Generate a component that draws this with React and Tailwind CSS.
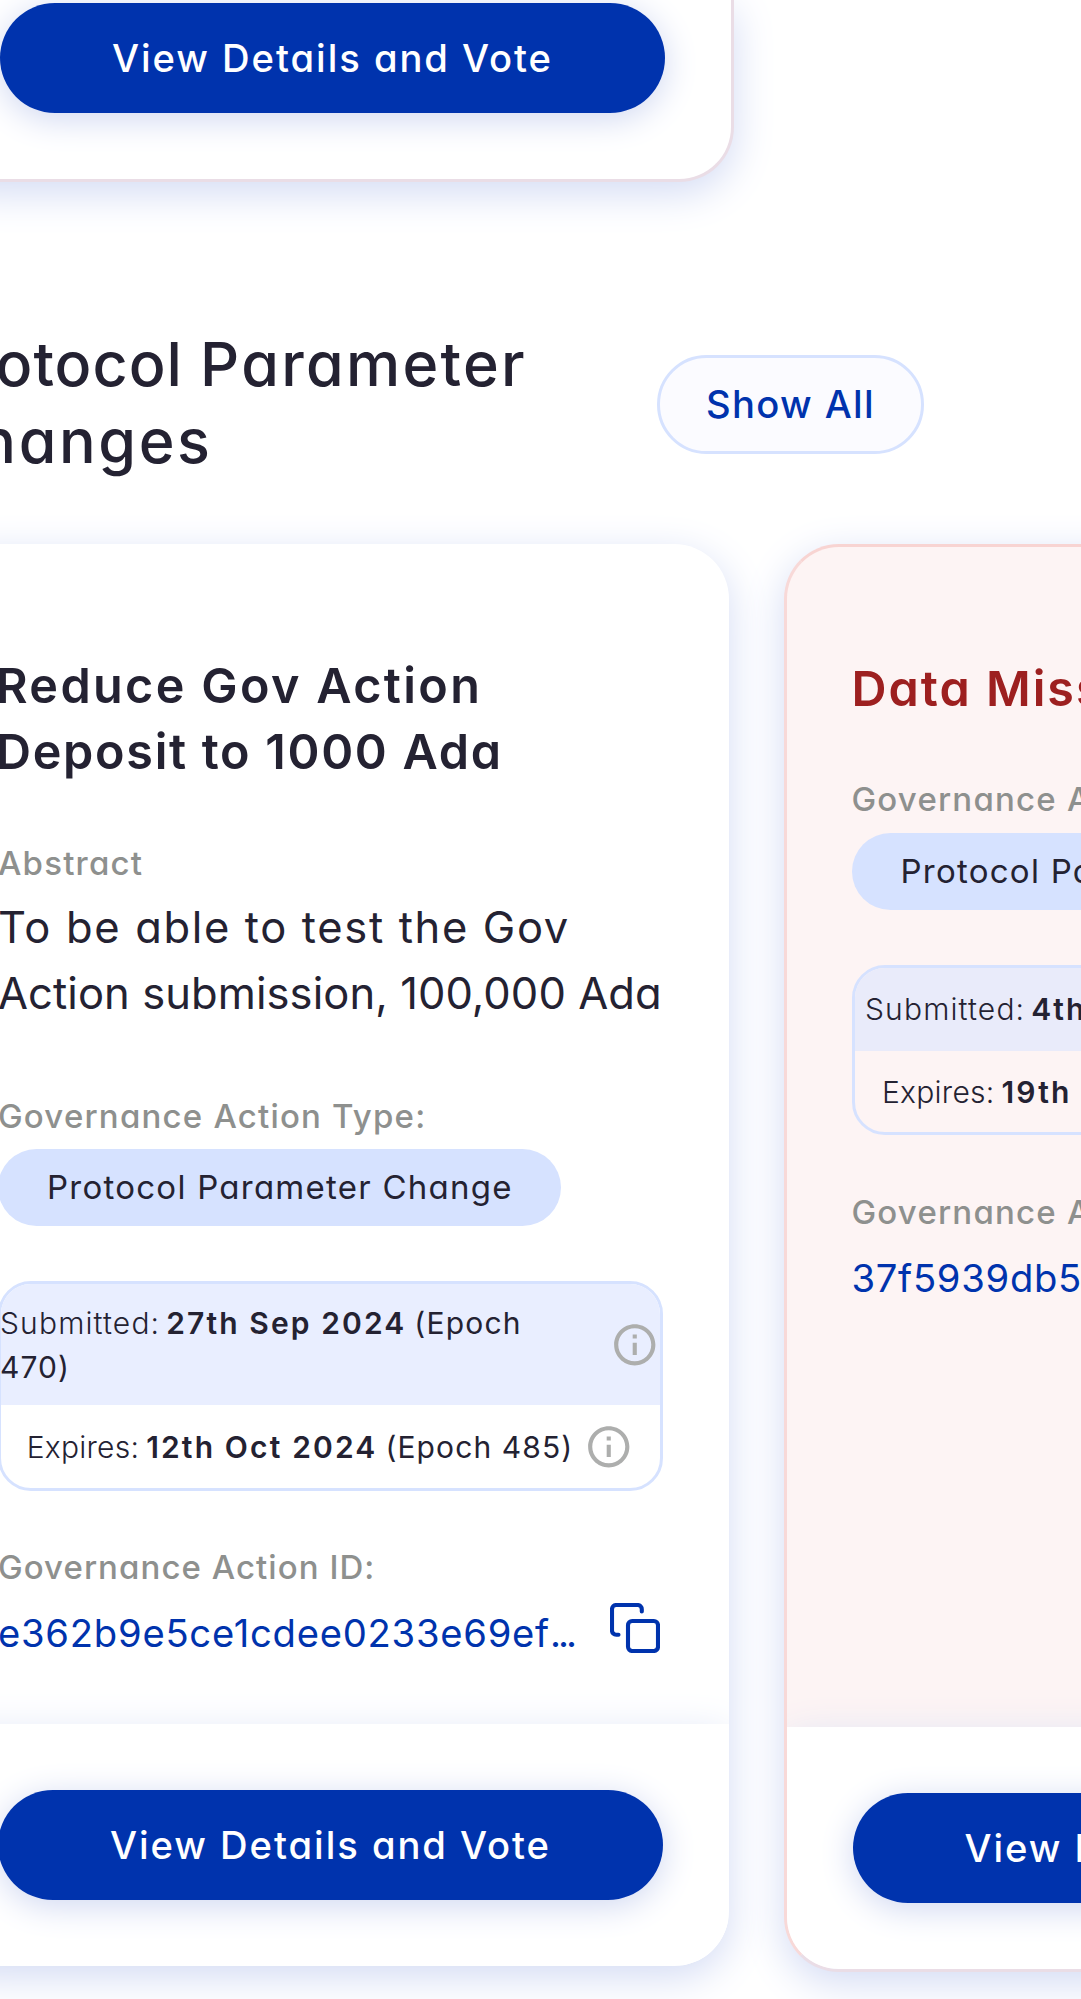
const cardShadow = "shadow-[0_11px_41px_0_#d3dbf4]";

function VoteButton({ className = "" }) {
  return (
    <button
      type="button"
      className={`flex h-[110px] w-[665px] shrink-0 items-center justify-center rounded-full bg-[#0033ad] pt-[2px] text-[38.2px] font-medium tracking-[1.95px] text-white shadow-[0_6px_34px_0_#cfd7f1] ${className}`}
    >
      View Details and Vote
    </button>
  );
}

function Label({ children, className = "" }) {
  return (
    <p className={`text-[33px] leading-[44px] font-medium tracking-[1.2px] whitespace-nowrap text-[#8e908e] ${className}`}>
      {children}
    </p>
  );
}

function TypePill({ className = "" }) {
  return (
    <div className={`flex h-[77px] w-[562.5px] items-center rounded-full bg-[#d6e2ff] pl-[49px] text-[33px] tracking-[1.25px] whitespace-nowrap ${className}`}>
      Protocol Parameter Change
    </div>
  );
}

function InfoIcon() {
  return (
    <svg viewBox="0 0 24 24" className="size-[49.5px] shrink-0" fill="#adaead">
      <path d="M11 7h2v2h-2zm0 4h2v6h-2zm1-9C6.48 2 2 6.48 2 12s4.48 10 10 10 10-4.48 10-10S17.52 2 12 2m0 18c-4.41 0-8-3.59-8-8s3.59-8 8-8 8 3.59 8 8-3.59 8-8 8" />
    </svg>
  );
}

function CopyIcon() {
  return (
    <svg viewBox="0 0 50 50" className="size-[50px] shrink-0" fill="none" stroke="#0033ad" strokeWidth="4.1" strokeLinecap="round">
      <rect x="18" y="18" width="30" height="30" rx="4.2" />
      <path d="M8.500 31.800H6.200A4.200 4.200 0 0 1 2 27.600V6.200A4.200 4.200 0 0 1 6.200 2H27.600A4.200 4.200 0 0 1 31.800 6.200V8.500" />
    </svg>
  );
}

function Submitted({ date, epoch }) {
  return (
    <>
      <span className="font-light tracking-[1.15px]">Submitted:</span>
      <span className="ml-[6px] font-semibold tracking-[2.1px]">{date}</span>
      <span className="ml-[8px] tracking-[1.2px]">{epoch}</span>
    </>
  );
}

function Expires({ date, epoch }) {
  return (
    <>
      <span className="font-light tracking-[0.25px]">Expires:</span>
      <span className="ml-[7px] font-semibold tracking-[2.15px]">{date}</span>
      <span className="ml-[8px] tracking-[1.1px]">{epoch}</span>
    </>
  );
}

function Footer() {
  return (
    <div className="mt-auto h-[242px] shrink-0 bg-white px-[66px] pt-[66px] shadow-[0_11px_41px_0_#d9e0f4]">
      <VoteButton />
    </div>
  );
}

export default function App() {
  return (
    <main className="h-[1999px] w-[1081px] overflow-hidden bg-white font-['Inter',sans-serif] text-[#242232] [font-feature-settings:'cv11']">
      <div className="-ml-[68px]">
        <section className={`h-[181.5px] w-[801.5px] rounded-b-[55px] border-[3px] border-t-0 border-[#eadde6] bg-white pt-[2.5px] pl-[65px] ${cardShadow}`}>
          <VoteButton />
        </section>

        <header className="mt-[144px] flex h-[154px] items-center">
          <h2 className="w-[725px] shrink-0 text-[61px] leading-[77px] font-medium whitespace-nowrap">
            <span className="block">
              <span className="tracking-[1px]">Protocol </span>
              <span className="tracking-[2.3px]">Parameter</span>
            </span>
            <span className="block tracking-[2.6px]">Changes</span>
          </h2>
          <button
            type="button"
            className="mt-[4px] flex h-[99px] w-[267px] items-center justify-center rounded-full border-[3px] border-[#d6e2ff] bg-[#fbfbff] text-[38.2px] font-medium tracking-[1.35px] text-[#0033ad]"
          >
            Show All
          </button>
        </header>

        <div className="mt-[64.5px] flex items-start gap-[55px]">
          <article className={`flex h-[1422px] w-[797px] shrink-0 flex-col overflow-hidden rounded-[55px] bg-white ${cardShadow}`}>
            <div className="px-[66px] pt-[109.4px]">
              <h3 className="-ml-[2px] text-[48.5px] leading-[66px] font-semibold whitespace-nowrap">
                <span className="block tracking-[2.35px]">Reduce Gov Action</span>
                <span className="block tracking-[1.7px]">Deposit to 1000 Ada</span>
              </h3>
              <Label className="mt-[56px]">Abstract</Label>
              <p className="mt-[9px] text-[43.5px] leading-[66px] whitespace-nowrap">
                <span className="block tracking-[1.65px]">To be able to test the Gov</span>
                <span className="block tracking-[0.08px]">Action submission, 100,000 Ada</span>
              </p>
              <Label className="mt-[68px]">Governance Action Type:</Label>
              <TypePill className="mt-[11px]" />
              <div className="mt-[55px] h-[209.5px] w-[664.5px] overflow-hidden rounded-[33px] border-[3px] border-[#d6e2ff] text-[30px] leading-[44px] whitespace-nowrap">
                <div className="flex h-[121px] items-center bg-[#e9eeff]">
                  <p className="-ml-[1px] w-[610.5px]">
                    <Submitted date="27th Sep 2024" epoch="(Epoch" />
                    <span className="block tracking-[1.1px]">470)</span>
                  </p>
                  <InfoIcon />
                </div>
                <div className="flex h-[82.5px] items-center justify-center gap-[11px]">
                  <p>
                    <Expires date="12th Oct 2024" epoch="(Epoch 485)" />
                  </p>
                  <InfoIcon />
                </div>
              </div>
              <Label className="mt-[54.5px] tracking-[1.05px]">Governance Action ID:</Label>
              <div className="mt-[16.5px] flex h-[55px] w-[662px] items-center justify-between text-[#0033ad]">
                <p className="text-[38.2px] leading-[55px] tracking-[0.75px]">
                  e362b9e5ce1cdee0233e69ef<span className="tracking-[-3px]">...</span>
                </p>
                <div className="-mt-[11px]">
                  <CopyIcon />
                </div>
              </div>
            </div>
            <Footer />
          </article>

          <article className={`-ml-[0.5px] flex h-[1427.5px] w-[802px] shrink-0 flex-col overflow-hidden rounded-[55px] border-[3px] border-t-[#f8d4d2] border-r-[#f8d4d2] border-b-[#eadde6] border-l-[#f8d9d8] bg-[#fdf4f4] ${cardShadow}`}>
            <div className="px-[65px] pt-[109px]">
              <h3 className="text-[48.5px] leading-[66px] font-semibold tracking-[2px] text-[#9d2020]">Data Missing</h3>
              <Label className="mt-[54.5px]">Governance Action Type:</Label>
              <TypePill className="mt-[12.5px]" />
              <div className="mt-[55px] h-[170px] w-[664px] overflow-hidden rounded-[33px] border-[3px] border-[#d6e2ff] text-[30px] leading-[44px] whitespace-nowrap">
                <div className="flex h-[82.5px] items-center gap-[13px] bg-[#e9ebfa] pl-[10.5px]">
                  <p>
                    <Submitted date="4th Oct 2024" epoch="(Epoch 477)" />
                  </p>
                  <InfoIcon />
                </div>
                <div className="flex h-[82.5px] items-center gap-[13px] pl-[27.5px]">
                  <p>
                    <Expires date="19th Oct 2024" epoch="(Epoch 492)" />
                  </p>
                  <InfoIcon />
                </div>
              </div>
              <Label className="mt-[55px]">Governance Action ID:</Label>
              <p className="mt-[17px] text-[38.2px] leading-[55px] tracking-[0.7px] text-[#0033ad]">37f5939db5...</p>
            </div>
            <Footer />
          </article>
        </div>
      </div>
    </main>
  );
}
